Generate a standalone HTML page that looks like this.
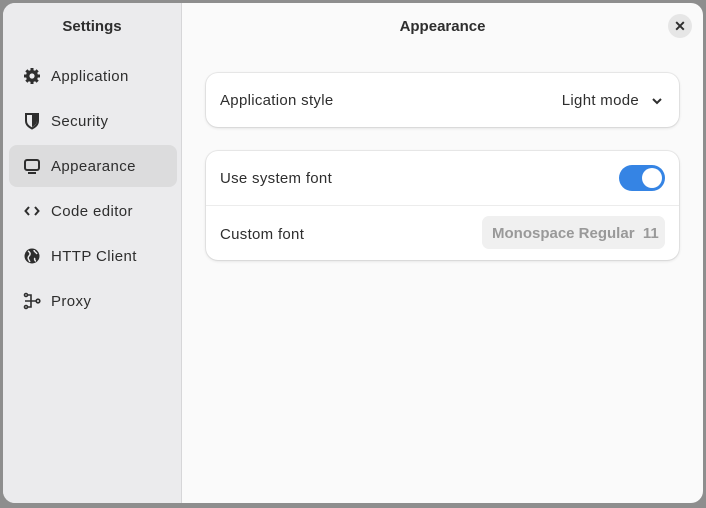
<!DOCTYPE html>
<html><head><style>
*{box-sizing:border-box;margin:0;padding:0}
body{width:706px;height:508px;background:#8e8e8e;font-family:"Liberation Sans",sans-serif;position:relative;overflow:hidden}
.win{position:absolute;left:3px;top:3px;width:700px;height:500px;border-radius:12px;overflow:hidden;background:#fafafa}
.side{position:absolute;left:0;top:0;width:179px;height:500px;background:#ebebed;border-right:1px solid #d6d6d8}
.side h1{font-size:15px;font-weight:bold;text-align:center;margin-top:15px;color:#2e2e2e}
.item{position:absolute;left:6px;width:168px;height:42px;border-radius:8px;display:flex;align-items:center;font-size:15px;color:#2e2e2e;letter-spacing:.4px}
.item svg{position:absolute;left:14px}
.item span{position:absolute;left:42px;top:13px}
.sel{background:#dcdcdd}
.main h2{position:absolute;left:179px;width:521px;top:15px;text-align:center;font-size:15px;font-weight:bold;color:#2e2e2e}
.close{position:absolute;left:665px;top:11px;width:24px;height:24px;border-radius:50%;background:#e6e6e6;font-size:14px;text-align:center;line-height:24px;font-weight:bold;color:#2e2e2e}
.card{position:absolute;left:203px;width:473px;background:#fff;border-radius:12px;box-shadow:0 0 0 1px rgba(0,0,0,.06),0 1px 3px rgba(0,0,0,.12)}
.row{position:relative;height:55px;font-size:15px;color:#2e2e2e;letter-spacing:.3px}
.row .l{position:absolute;left:14px;top:19px}
</style></head><body>
<div class="win">
<div class="side"><h1>Settings</h1>
<div class="item" style="top:52px"><svg width="18" height="18" viewBox="0 0 18 18"><g fill="#2e2e2e"><circle cx="9" cy="9" r="6"/><rect x="7.5" y="1" width="3" height="16"/><rect x="1" y="7.5" width="16" height="3"/><rect x="7.5" y="1" width="3" height="16" transform="rotate(45 9 9)"/><rect x="7.5" y="1" width="3" height="16" transform="rotate(-45 9 9)"/></g><circle cx="9" cy="9" r="2.6" fill="#ebebed"/></svg><span>Application</span></div>
<div class="item" style="top:97px"><svg width="18" height="18" viewBox="0 0 18 18"><path d="M3 2h12v7c0 4-3 6-6 7.5C6 15 3 13 3 9z" fill="none" stroke="#2e2e2e" stroke-width="2"/><path d="M9 3v12c2-1 5-3 5-6V3z" fill="#2e2e2e"/></svg><span>Security</span></div>
<div class="item sel" style="top:142px"><svg width="18" height="18" viewBox="0 0 18 18"><rect x="2" y="3" width="14" height="10" rx="2" fill="none" stroke="#2e2e2e" stroke-width="2"/><rect x="5" y="15" width="8" height="2" fill="#2e2e2e"/></svg><span>Appearance</span></div>
<div class="item" style="top:187px"><svg width="18" height="18" viewBox="0 0 18 18"><path d="M6 5L2.5 9 6 13M12 5l3.5 4L12 13" fill="none" stroke="#2e2e2e" stroke-width="2"/></svg><span>Code editor</span></div>
<div class="item" style="top:232px"><svg width="18" height="18" viewBox="0 0 18 18"><circle cx="9" cy="9" r="7.5" fill="#2e2e2e"/><path d="M5 4c2 1 3 3 1 5s0 4 1 6M11 3c0 2 2 2 3 4M12 11c-1 1 0 3 1 3" stroke="#ebebed" stroke-width="1.5" fill="none"/></svg><span>HTTP Client</span></div>
<div class="item" style="top:277px"><svg width="18" height="18" viewBox="0 0 18 18"><g fill="none" stroke="#2e2e2e" stroke-width="1.6"><circle cx="3" cy="3" r="1.5"/><circle cx="3" cy="15" r="1.5"/><circle cx="15" cy="9" r="1.8"/><path d="M4.5 3H8v12H4.5M8 9h5M2 9h6"/></g></svg><span>Proxy</span></div>
</div>
<div class="main"><h2>Appearance</h2><div class="close">✕</div>
<div class="card" style="top:70px;height:54px"><div class="row"><span style="position:absolute;left:14px;top:19px">Application style</span><span style="position:absolute;right:40px;top:19px">Light mode</span><svg style="position:absolute;right:16px;top:24px" width="12" height="8" viewBox="0 0 12 8"><path d="M2 2l4 4 4-4" fill="none" stroke="#2e2e2e" stroke-width="2"/></svg></div></div>
<div class="card" style="top:148px;height:109px"><div class="row" style="border-bottom:1px solid #ececec"><span class="l">Use system font</span><div style="position:absolute;left:413px;top:14px;width:46px;height:26px;border-radius:13px;background:#3584e4"><div style="position:absolute;right:3px;top:3px;width:20px;height:20px;border-radius:50%;background:#fff"></div></div></div>
<div class="row"><span class="l" style="top:20px">Custom font</span><div style="position:absolute;left:276px;top:10px;width:183px;height:33px;border-radius:7px;background:#f0f0f0;color:#999;font-weight:bold;font-size:15px;line-height:35px;padding-left:10px;letter-spacing:0">Monospace Regular&nbsp; 11</div></div></div>
</div></div>
</body></html>
